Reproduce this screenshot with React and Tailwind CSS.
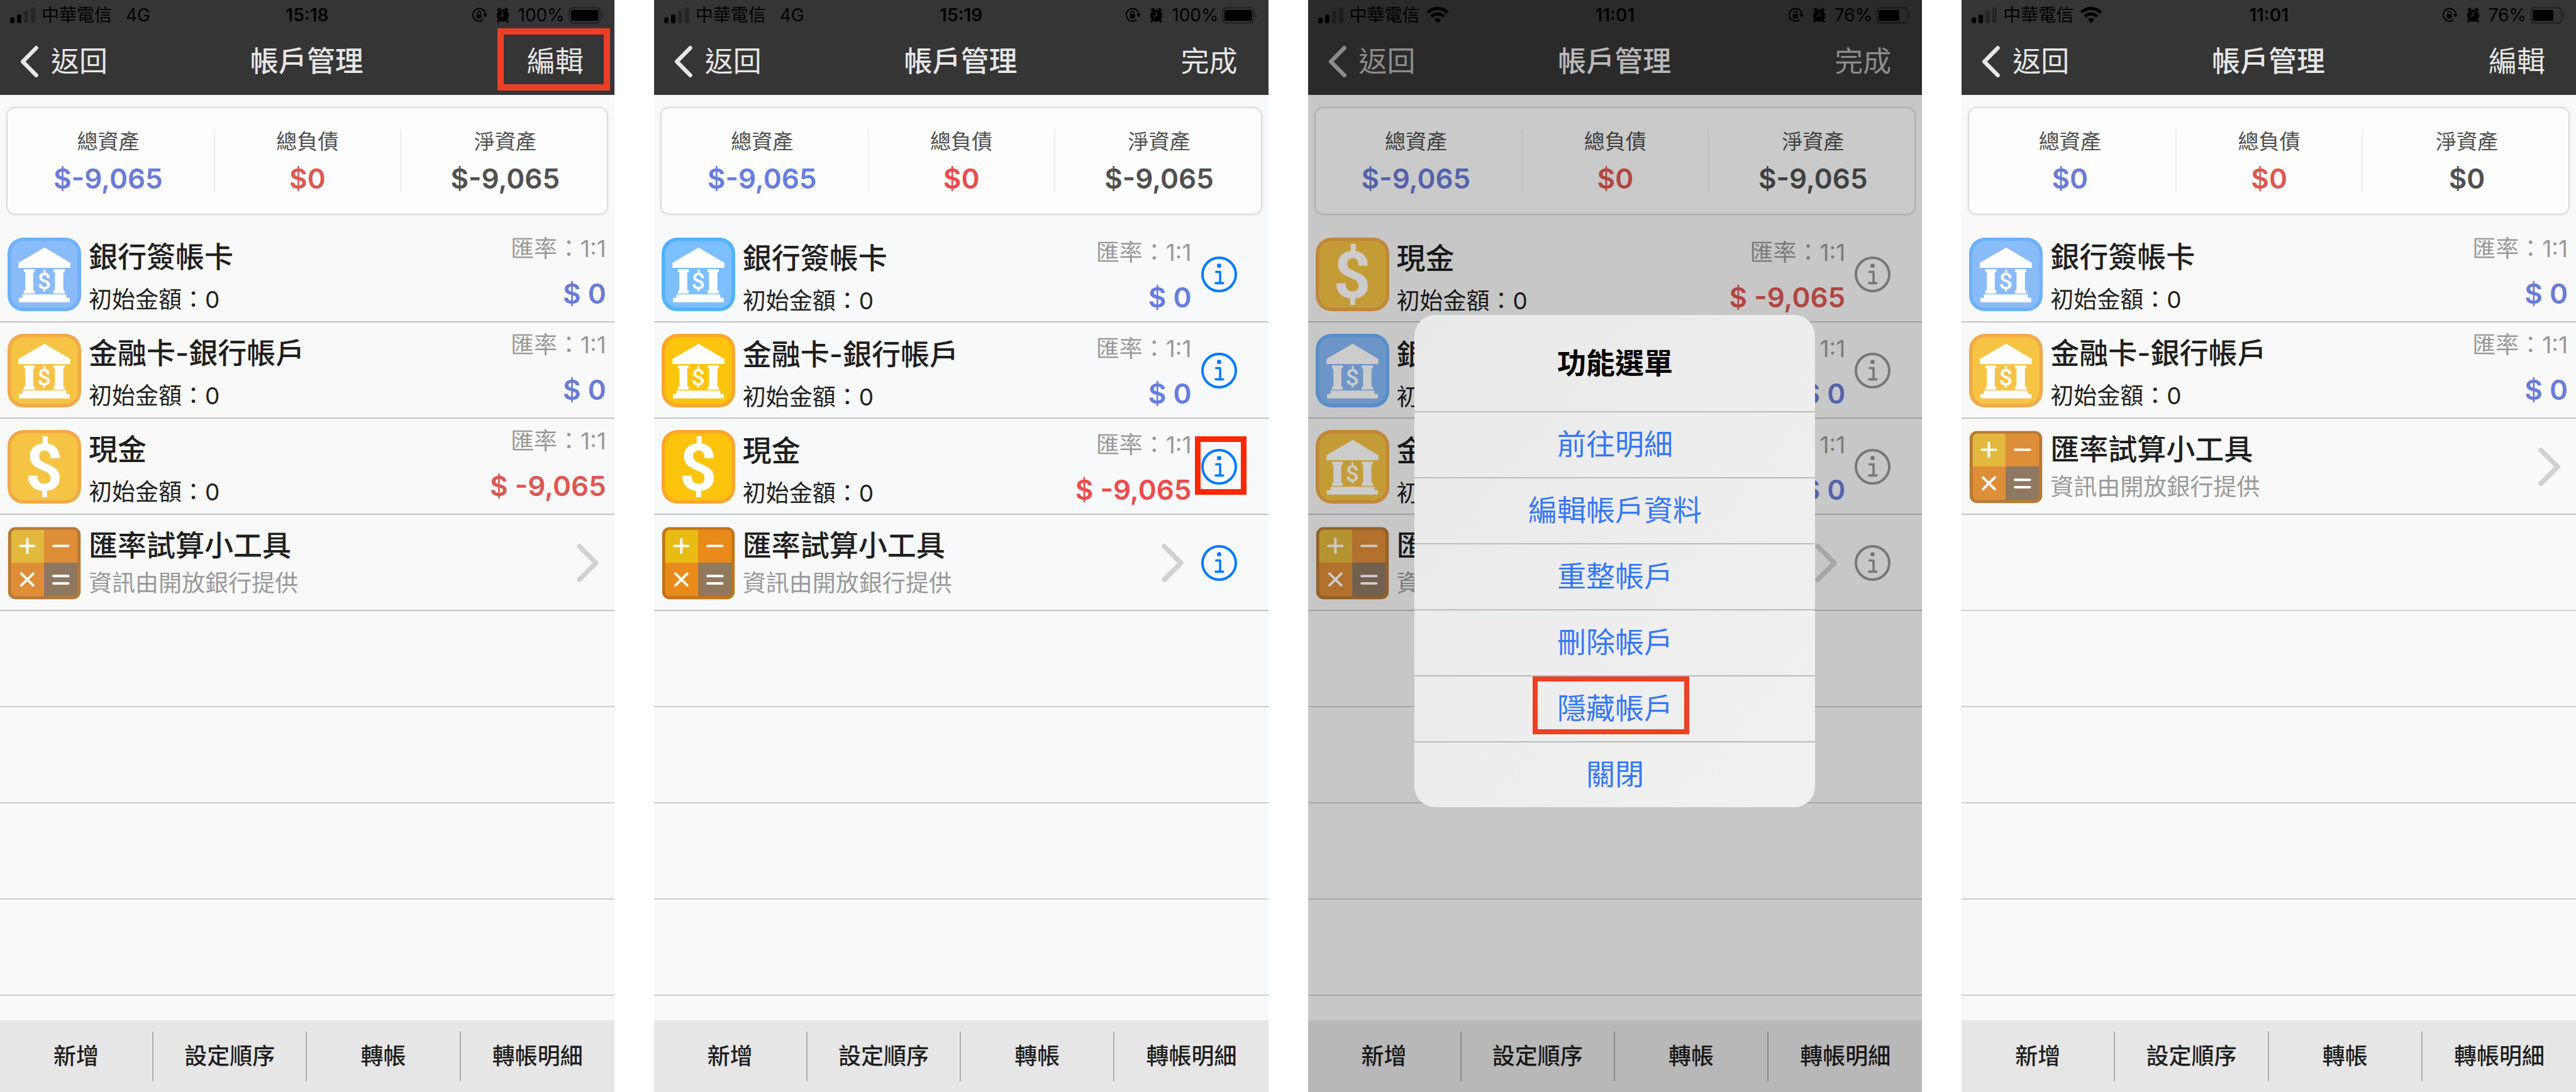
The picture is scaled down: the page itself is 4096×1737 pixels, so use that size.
import { useState } from 'react'

const BANK_CARD = { id: 'card', name: '銀行簽帳卡', icon: 'bank', tone: 'blue', initial: 0, rate: '1:1', balance: '$ 0' }
const BANK_DEBIT = { id: 'debit', name: '金融卡-銀行帳戶', icon: 'bank', tone: 'gold', initial: 0, rate: '1:1', balance: '$ 0' }
const CASH = { id: 'cash', name: '現金', icon: 'cash', tone: 'gold', initial: 0, rate: '1:1', balance: '$ -9,065' }
const CONVERTER = { id: 'converter', name: '匯率試算小工具', icon: 'calculator', note: '資訊由開放銀行提供' }

const SPENT = { assets: '$-9,065', debts: '$0', net: '$-9,065' }
const EMPTY = { assets: '$0', debts: '$0', net: '$0' }

const TOOLBAR_ACTIONS = ['新增', '設定順序', '轉帳', '轉帳明細']
const MENU_ACTIONS = ['前往明細', '編輯帳戶資料', '重整帳戶', '刪除帳戶', '隱藏帳戶', '關閉']

const SCREENS = [
  { id: 'list', time: '15:18', network: '4G', battery: 100, action: '編輯', totals: SPENT, rows: [BANK_CARD, BANK_DEBIT, CASH, CONVERTER], markAction: true },
  { id: 'edit', time: '15:19', network: '4G', battery: 100, action: '完成', totals: SPENT, rows: [BANK_CARD, BANK_DEBIT, CASH, CONVERTER], editing: true, vivid: true, markInfo: 'cash' },
  { id: 'menu', time: '11:01', network: 'wifi', battery: 76, action: '完成', totals: SPENT, rows: [CASH, BANK_CARD, BANK_DEBIT, CONVERTER], editing: true, menu: true, markMenu: '隱藏帳戶' },
  { id: 'done', time: '11:01', network: 'wifi', battery: 76, action: '編輯', totals: EMPTY, rows: [BANK_CARD, BANK_DEBIT, CONVERTER] },
]

const TILE_COLORS = {
  blue: { soft: ['#8abbf9', '#6db1fb'], vivid: ['#7bbfff', '#4fb2ff'] },
  gold: { soft: ['#f6c445', '#f2a948'], vivid: ['#fcc40c', '#fea62a'] },
}

function AccountIcon({ icon, tone, vivid }) {
  if (icon === 'calculator') {
    return (
      <svg viewBox="0 0 149 149" className="size-[117px] shrink-0" aria-hidden="true">
        <rect x="1" y="2" width="147" height="146" rx="15" fill={vivid ? '#c07518' : '#b77a35'} />
        <clipPath id={vivid ? 'calc-v' : 'calc'}>
          <rect x="7" y="7" width="135" height="135" rx="10" />
        </clipPath>
        <g clipPath={vivid ? 'url(#calc-v)' : 'url(#calc)'}>
          <path d="M7 7h67v67H7z" fill={vivid ? '#e8bb15' : '#e2b93e'} />
          <path d="M74 7h68v67H74zM7 74h67v68H7z" fill={vivid ? '#ea8a1a' : '#df8e38'} />
          <path d="M74 74h68v68H74z" fill={vivid ? '#90795c' : '#8f7862'} />
        </g>
        <path
          d="M26 40h28M40 26v28M93 40h30M28 96l24 24M52 96l-24 24M93 101h30M93 116h30"
          stroke="#fff"
          strokeWidth="5"
          strokeLinecap="round"
        />
      </svg>
    )
  }

  const [fill, edge] = TILE_COLORS[tone][vivid ? 'vivid' : 'soft']
  return (
    <svg viewBox="0 0 149 149" className="size-[117px] shrink-0" aria-hidden="true">
      <rect width="149" height="149" rx="32" fill={edge} />
      <rect x="7" y="7" width="135" height="135" rx="25" fill={fill} />
      {icon === 'bank' ? (
        <>
          <path
            fill="#fff"
            d="M75 20l52 31v10H22V51zM33 64h22v6h-3v37h3v6H33v-6h3V70h-3zM93 64h23v6h-3v37h3v6H93v-6h3V70h-3zM30 115h89v8H30zM23 122h103v9H23z"
          />
          <text x="74" y="105" textAnchor="middle" fontSize="48" fill="#fff" className="font-['Roboto',sans-serif] font-medium">$</text>
        </>
      ) : (
        <text x="74" y="122" textAnchor="middle" fontSize="132" fill="#fff" className="font-['Roboto',sans-serif] font-bold">$</text>
      )}
    </svg>
  )
}

function SignalIcon() {
  return (
    <svg viewBox="0 0 51 32" className="h-[25px] w-[40px]" aria-hidden="true">
      <rect x="0" y="20" width="9" height="12" rx="3" />
      <rect x="14" y="14" width="9" height="18" rx="3" />
      <rect x="28" y="7" width="9" height="25" rx="3" fill="#262626" />
      <rect x="42" y="0" width="9" height="32" rx="3" fill="#262626" />
    </svg>
  )
}

function WifiIcon() {
  return (
    <svg viewBox="0 0 46 33" className="h-[26px] w-[36px]" aria-hidden="true">
      <path d="M3 11.500a28 28 0 0 1 40 0M10.500 19.500a17.500 17.500 0 0 1 25 0" fill="none" stroke="#000" strokeWidth="6.500" />
      <path d="M23 33l-7-7.500a10 10 0 0 1 14 0z" />
    </svg>
  )
}

function RotationLockIcon() {
  return (
    <svg viewBox="0 0 31 30" className="h-[24px] w-[25px]" aria-hidden="true">
      <path d="M22.500 24.500a12.500 12.500 0 1 1 4.800-11" fill="none" stroke="#000" strokeWidth="2.600" />
      <path d="M22.500 13H31l-4.200 6.500z" />
      <rect x="9.500" y="13" width="10" height="9" rx="1" />
      <path d="M11.500 13v-2.500a3 3 0 0 1 6 0V13" fill="none" stroke="#000" strokeWidth="1.800" />
    </svg>
  )
}

function AlarmIcon() {
  return (
    <svg viewBox="0 0 27 30" className="h-[24px] w-[21px]" aria-hidden="true">
      <circle cx="13.500" cy="16" r="12.500" />
      <path d="M4 4.500L7.500 2M23 4.500L19.500 2M5.500 26l-2 2.500M21.500 26l2 2.500" stroke="#000" strokeWidth="4" strokeLinecap="round" />
      <path d="M13.500 8.500V17H7" fill="none" stroke="#353535" strokeWidth="2" />
    </svg>
  )
}

function BatteryIcon({ level }) {
  return (
    <svg viewBox="0 0 72 34" className="h-[27px] w-[57px]" aria-hidden="true">
      <rect x="1.500" y="1.500" width="62" height="31" rx="8" fill="none" stroke="#222" strokeWidth="3" />
      <rect x="5" y="6" width={(55 * level) / 100} height="22" rx="4" />
      <path d="M67 11q5 6 0 12z" fill="#222" />
    </svg>
  )
}

function ChevronIcon() {
  return (
    <svg viewBox="0 0 44 78" className="h-[61px] w-[35px]" fill="none" stroke="#d1d1d1" strokeWidth="10" strokeLinecap="round" strokeLinejoin="round" aria-hidden="true">
      <path d="M5 5l34 34L5 73" />
    </svg>
  )
}

function InfoButton({ name, muted, marked }) {
  return (
    <button type="button" aria-label={`${name} 功能選單`} className={`relative size-[57px] shrink-0 ${muted ? 'text-[#959595]' : 'text-[#007aff]'}`}>
      <svg viewBox="0 0 72 72" className="size-full" fill="none" stroke="currentColor" aria-hidden="true">
        <circle cx="36" cy="36" r="33.500" strokeWidth="5" />
        <circle cx="36" cy="18.500" r="4.300" fill="currentColor" stroke="none" />
        <path d="M30 31h8v22M29 53.500h15" strokeWidth="4.500" strokeLinecap="round" strokeLinejoin="round" />
      </svg>
      {marked && <span className="absolute -top-5 -right-[15px] -bottom-4 -left-[10px] border-[9px] border-[#ff2600]" />}
    </button>
  )
}

function StatusBar({ time, network, battery }) {
  return (
    <div className="grid h-12 grid-cols-3 items-center px-4 text-[28px] leading-none text-black">
      <div className="flex items-center gap-[10px]">
        <SignalIcon />
        <span>中華電信</span>
        {network === 'wifi' ? <WifiIcon /> : <span className="ml-3">{network}</span>}
      </div>
      <span className="text-center font-semibold">{time}</span>
      <div className="flex items-center justify-end gap-[14px]">
        <RotationLockIcon />
        <AlarmIcon />
        <div className="flex items-center gap-[6px]">
          <span>{battery}%</span>
          <BatteryIcon level={battery} />
        </div>
      </div>
    </div>
  )
}

function NavBar({ action, muted, marked }) {
  return (
    <div className={`grid h-[103px] grid-cols-3 items-center pr-[49px] pb-1 pl-8 text-[45px] leading-none ${muted ? 'text-[#b0b0b0]' : 'text-[#e6e6e6]'}`}>
      <button type="button" className="flex items-center gap-5 justify-self-start">
        <svg viewBox="0 0 36 63" className="h-[50px] w-[29px]" fill="none" stroke="currentColor" strokeWidth="8" strokeLinecap="round" strokeLinejoin="round" aria-hidden="true">
          <path d="M32 4L5 31.500L32 59" />
        </svg>
        返回
      </button>
      <h1 className="pl-4 text-center font-medium text-[#e6e6e6]">帳戶管理</h1>
      <button type="button" className="relative justify-self-end">
        {action}
        {marked && <span className="absolute -top-[30px] -right-[42px] -bottom-6 -left-[47px] border-[10px] border-[#eb4025]" />}
      </button>
    </div>
  )
}

function Summary({ totals, blue, red }) {
  return (
    <section className="mx-3 mt-[21px] grid grid-cols-[328fr_298fr_327fr] rounded-xl bg-[#fdfdfd] py-[34px] text-center shadow-[0_0_4px_rgba(0,0,0,0.35)]">
      <div className="pr-2">
        <p className="text-[33px] leading-[38px] text-[#505050]">總資產</p>
        <p className={`pt-[18px] text-[44px] leading-[44px] font-semibold ${blue}`}>{totals.assets}</p>
      </div>
      <div className="border-x-2 border-[#eeeeee]">
        <p className="text-[33px] leading-[38px] text-[#505050]">總負債</p>
        <p className={`pt-[18px] text-[44px] leading-[44px] font-semibold ${red}`}>{totals.debts}</p>
      </div>
      <div className="pl-1">
        <p className="text-[33px] leading-[38px] text-[#505050]">淨資產</p>
        <p className="pt-[18px] text-[44px] leading-[44px] font-semibold text-[#505050]">{totals.net}</p>
      </div>
    </section>
  )
}

function AccountRow({ account, editing, vivid, menu, marked, blue, red }) {
  const negative = account.balance?.includes('-')
  return (
    <li className={`flex h-[153px] items-center border-b-2 border-[#c4c4c4] pt-[2px] pl-3 ${editing ? 'pr-[50px]' : 'pr-[13px]'}`}>
      <AccountIcon icon={account.icon} tone={account.tone} vivid={vivid} />
      <div className={`ml-3 min-w-0 flex-1 whitespace-nowrap ${editing && !account.note ? 'pt-4' : 'pt-3'}`}>
        <p className="text-[46px] leading-[60px] font-medium text-[#1f1f1f]">{account.name}</p>
        {account.note ? (
          <p className="pb-2 text-[37px] leading-[62px] text-[#999999]">{account.note}</p>
        ) : (
          <p className="pt-2 text-[37px] leading-[62px] text-[#1f1f1f]">初始金額：{account.initial}</p>
        )}
      </div>
      {account.balance ? (
        <div className={`text-right whitespace-nowrap ${editing ? 'mr-[15px] pt-1' : 'pb-2'}`}>
          <p className="text-[37px] leading-[66px] text-[#999999]">匯率：{account.rate}</p>
          <p className={`pt-[2px] text-[44px] leading-[72px] font-semibold ${negative ? red : blue}`}>{account.balance}</p>
        </div>
      ) : (
        <div className={editing ? 'mr-7' : 'mr-3'}>
          <ChevronIcon />
        </div>
      )}
      {editing && <InfoButton name={account.name} muted={menu} marked={marked} />}
    </li>
  )
}

function Toolbar() {
  return (
    <footer className="grid h-[114px] grid-cols-4 items-center divide-x-2 divide-[#adadad] bg-[#e6e6e6]">
      {TOOLBAR_ACTIONS.map((label) => (
        <button key={label} type="button" className="h-[79px] text-[36px] leading-none font-medium text-[#1f1f1f]">
          {label}
        </button>
      ))}
    </footer>
  )
}

function ActionMenu({ marked, onClose }) {
  return (
    <div className="absolute inset-0 flex items-start justify-center bg-black/20 pt-[501px]">
      <div role="dialog" aria-label="功能選單" className="w-[637px] overflow-hidden rounded-[33px] bg-linear-to-br from-[#e9e9e9] to-[#f1f1f1]">
        <h2 className="text-center text-[46px] leading-[153px] font-semibold text-black">功能選單</h2>
        {MENU_ACTIONS.map((label) => (
          <button
            key={label}
            type="button"
            onClick={label === '關閉' ? onClose : undefined}
            className="relative block h-[105px] w-full border-t-2 border-[#b9bcbc] pb-1 text-[46px] leading-none text-[#3478f6]"
          >
            {label}
            {label === marked && <span className="absolute top-0 right-[200px] bottom-[11px] left-[188px] border-[8px] border-[#eb4025]" />}
          </button>
        ))}
      </div>
    </div>
  )
}

function Screen({ screen }) {
  const [menuOpen, setMenuOpen] = useState(Boolean(screen.menu))
  const blue = screen.vivid ? 'text-[#667ddf]' : 'text-[#6a7bd6]'
  const red = screen.vivid ? 'text-[#ec4b4b]' : 'text-[#dc5852]'

  return (
    <main className={`relative flex flex-col overflow-hidden ${screen.vivid ? 'bg-[#f8f9fb]' : 'bg-[#f9f9f9]'}`}>
      <header className="bg-[#353535]">
        <StatusBar time={screen.time} network={screen.network} battery={screen.battery} />
        <NavBar action={screen.action} muted={menuOpen} marked={screen.markAction} />
      </header>
      <Summary totals={screen.totals} blue={blue} red={red} />
      <ul className="mt-5 flex-1">
        {screen.rows.map((account) => (
          <AccountRow
            key={account.id}
            account={account}
            editing={screen.editing}
            vivid={screen.vivid}
            menu={menuOpen}
            marked={screen.markInfo === account.id}
            blue={blue}
            red={red}
          />
        ))}
        {Array.from({ length: 8 - screen.rows.length }, (_, i) => (
          <li key={i} className="h-[153px] border-b-2 border-[#cfcfcf]" />
        ))}
      </ul>
      <Toolbar />
      {menuOpen && <ActionMenu marked={screen.markMenu} onClose={() => setMenuOpen(false)} />}
    </main>
  )
}

export default function App() {
  return (
    <div lang="zh-Hant" className="grid min-h-screen grid-cols-4 gap-[63px] bg-white font-['Inter','Noto_Sans_CJK_TC',sans-serif]">
      {SCREENS.map((screen) => (
        <Screen key={screen.id} screen={screen} />
      ))}
    </div>
  )
}
